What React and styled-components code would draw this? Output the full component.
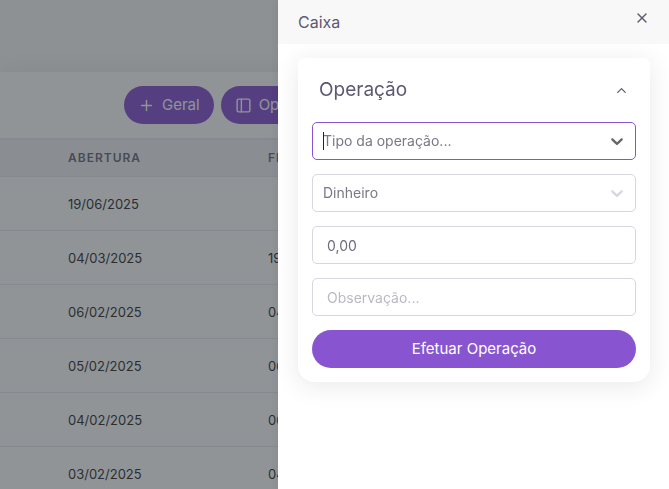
import React, { useState } from "react"
import styled, { createGlobalStyle, css } from "styled-components"
import { FiChevronUp, FiPlus, FiSidebar, FiX } from "react-icons/fi"

const GlobalStyle = createGlobalStyle`
  *,
  *::before,
  *::after {
    box-sizing: border-box;
  }

  body {
    margin: 0;
    background: #f8f8f8;
    color: #6e6b7b;
    font-family: Inter, "Open Sans", sans-serif;
    font-size: 14px;
    line-height: 20px;
  }

  button,
  input,
  select {
    font: inherit;
  }
`

const Page = styled.main`
  height: 100vh;
  padding-top: 72px;
  overflow: hidden;
`

const Panel = styled.section`
  background: #fff;
  box-shadow: 0 4px 24px rgba(34, 41, 47, 0.1);
`

const Toolbar = styled.div`
  display: flex;
  gap: 7px;
  padding: 14px 14px 14px 124px;
`

const Button = styled.button`
  display: inline-flex;
  flex-shrink: 0;
  align-items: center;
  justify-content: center;
  gap: 7px;
  width: ${({ $block }) => ($block ? "100%" : "auto")};
  height: 38px;
  padding: 0 14px;
  border: 0;
  border-radius: 19px;
  background: #8854d0;
  color: #fff;
  font-size: 15px;
  cursor: pointer;
`

const Table = styled.table`
  width: 100%;
  min-width: 648px;
  border-collapse: separate;
  border-spacing: 0;
  table-layout: fixed;
`

const HeadCell = styled.th`
  width: ${({ $width }) => $width || "auto"};
  height: 39px;
  padding: 0 20px;
  border-top: 2px solid #ebe9f1;
  border-bottom: 1px solid #ebe9f1;
  background: #f3f2f7;
  font-size: 12px;
  font-weight: 600;
  letter-spacing: 1px;
  text-align: left;
  text-transform: uppercase;
`

const Cell = styled.td`
  height: 54px;
  padding: 0 20px;
  border-bottom: 1px solid #ebe9f1;
  color: #333;
  font-size: 13px;
`

const Backdrop = styled.div`
  position: fixed;
  inset: 0;
  background: rgba(34, 41, 47, 0.5);
`

const Drawer = styled.aside`
  position: fixed;
  top: 0;
  right: 0;
  bottom: 0;
  width: min(391px, 100%);
  overflow: hidden;
  background: #fff;
  box-shadow: 0 0 8px rgba(34, 41, 47, 0.1);
`

const DrawerHeader = styled.header`
  position: relative;
  z-index: 1;
  display: flex;
  align-items: flex-start;
  justify-content: space-between;
  padding: 10px 19px 10px 20px;
  background: #f8f8f8;
`

const DrawerTitle = styled.h5`
  margin: 0;
  color: #5e5873;
  font-size: 16px;
  font-weight: 400;
  line-height: 24px;
`

const IconButton = styled.button`
  display: flex;
  padding: 0;
  border: 0;
  background: none;
  color: #5e5873;
  cursor: pointer;
`

const DrawerBody = styled.div`
  padding: 14px 19px 14px 20px;
`

const Card = styled.section`
  padding: 0 14px 14px;
  border-radius: 6px 6px 16px 16px;
  background: #fff;
  box-shadow: 0 4px 24px rgba(34, 41, 47, 0.1);
`

const CardHeader = styled.div`
  display: flex;
  align-items: center;
  justify-content: space-between;
  height: 64px;
  padding: 0 7px;
`

const CardTitle = styled.h4`
  margin: 0;
  color: #5e5873;
  font-size: 19px;
  font-weight: 400;
  line-height: 24px;
`

const Form = styled.form`
  display: grid;
  gap: 14px;
`

const fieldStyles = css`
  display: block;
  width: 100%;
  height: 38px;
  border: 1px solid #d8d6de;
  border-radius: 5px;
  outline: none;
  background: #fff;
  color: #6e6b7b;
`

const Input = styled.input`
  ${fieldStyles}
  padding: 0 14px;

  &::placeholder {
    color: #b9b9c3;
    opacity: 1;
  }
`

const SelectWrapper = styled.div`
  position: relative;
`

const Select = styled.select`
  ${fieldStyles}
  padding: 0 38px 0 10px;
  border-color: ${({ $active }) => ($active ? "#8854d0" : "#d8d6de")};
  color: #7a7787;
  appearance: none;
`

const Caret = styled.span`
  position: absolute;
  top: 10px;
  left: 11px;
  width: 1px;
  height: 18px;
  background: #222;
`

const SelectArrow = styled.svg`
  position: absolute;
  top: 9px;
  right: 9px;
  width: 20px;
  height: 20px;
  fill: ${({ $active }) => ($active ? "#666" : "#d8d6de")};
  pointer-events: none;
`

const SelectField = ({ label, active, children, ...props }) => (
  <SelectWrapper>
    <Select aria-label={label} $active={active} {...props}>
      {children}
    </Select>
    {active && <Caret />}
    <SelectArrow $active={active} viewBox="0 0 20 20" aria-hidden="true">
      <path d="M4.516 7.548c0.436-0.446 1.043-0.481 1.576 0l3.908 3.747 3.908-3.747c0.533-0.481 1.141-0.446 1.574 0 0.436 0.445 0.408 1.197 0 1.615-0.406 0.418-4.695 4.502-4.695 4.502-0.217 0.223-0.502 0.335-0.787 0.335s-0.57-0.112-0.789-0.335c0 0-4.287-4.084-4.695-4.502s-0.436-1.17 0-1.615z" />
    </SelectArrow>
  </SelectWrapper>
)

const rows = [
  { abertura: "19/06/2025", fechamento: "" },
  { abertura: "04/03/2025", fechamento: "19/06/2025" },
  { abertura: "06/02/2025", fechamento: "04/03/2025" },
  { abertura: "05/02/2025", fechamento: "06/02/2025" },
  { abertura: "04/02/2025", fechamento: "06/02/2025" },
  { abertura: "03/02/2025", fechamento: "04/02/2025" },
]

const CaixaList = () => (
  <Page>
    <Panel>
      <Toolbar>
        <Button type="button">
          <FiPlus size={17} />
          Geral
        </Button>
        <Button type="button">
          <FiSidebar size={17} />
          Operação
        </Button>
      </Toolbar>

      <Table>
        <thead>
          <tr>
            <HeadCell $width="48px" />
            <HeadCell $width="200px">Abertura</HeadCell>
            <HeadCell>Fechamento</HeadCell>
          </tr>
        </thead>
        <tbody>
          {rows.map(({ abertura, fechamento }) => (
            <tr key={abertura}>
              <Cell />
              <Cell>{abertura}</Cell>
              <Cell>{fechamento}</Cell>
            </tr>
          ))}
        </tbody>
      </Table>
    </Panel>
  </Page>
)

const CaixaDrawer = ({ onCloseClicked }) => {
  const [expanded, setExpanded] = useState(true)
  const [tipo, setTipo] = useState("")
  const [valor, setValor] = useState("0,00")

  return (
    <Drawer role="dialog" aria-label="Caixa">
      <DrawerHeader>
        <DrawerTitle>Caixa</DrawerTitle>
        <IconButton type="button" aria-label="Fechar" onClick={onCloseClicked}>
          <FiX size={16} />
        </IconButton>
      </DrawerHeader>

      <DrawerBody>
        <Card>
          <CardHeader>
            <CardTitle>Operação</CardTitle>
            <IconButton
              type="button"
              aria-label="Recolher"
              aria-expanded={expanded}
              onClick={() => setExpanded(!expanded)}
            >
              <FiChevronUp size={15} />
            </IconButton>
          </CardHeader>

          {expanded && (
            <Form onSubmit={e => e.preventDefault()}>
              <SelectField
                label="Tipo da operação"
                active
                value={tipo}
                onChange={e => setTipo(e.target.value)}
              >
                <option value="">Tipo da operação...</option>
                <option value="entrada">Entrada</option>
                <option value="saida">Saída</option>
              </SelectField>
              <SelectField label="Forma de pagamento" defaultValue="dinheiro">
                <option value="dinheiro">Dinheiro</option>
              </SelectField>
              <Input
                aria-label="Valor"
                value={valor}
                onChange={e => setValor(e.target.value)}
              />
              <Input aria-label="Observação" placeholder="Observação..." />
              <Button type="submit" $block>
                Efetuar Operação
              </Button>
            </Form>
          )}
        </Card>
      </DrawerBody>
    </Drawer>
  )
}

const App = () => {
  const [open, setOpen] = useState(true)

  return (
    <>
      <GlobalStyle />
      <CaixaList />
      {open && (
        <>
          <Backdrop />
          <CaixaDrawer onCloseClicked={() => setOpen(false)} />
        </>
      )}
    </>
  )
}

export default App
